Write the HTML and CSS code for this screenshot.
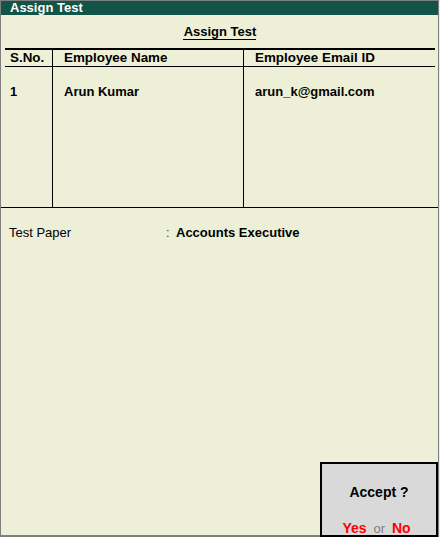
FILE: index.html
```html
<!DOCTYPE html>
<html lang="en">

<head>
    <meta charset="UTF-8">
    <meta name="viewport" content="width=device-width, initial-scale=1.0">
    <title>Assign Test</title>
    <link rel="stylesheet" href="styles.css">
</head>

<body>
    <div class="window">
        <header class="titlebar">Assign Test</header>

        <div class="heading">
            <span>Assign Test</span>
        </div>

        <section class="list">
            <div class="grid">
                <div class="th">S.No.</div>
                <div class="th col">Employee Name</div>
                <div class="th col">Employee Email ID</div>

                <div class="td">1</div>
                <div class="td col">Arun Kumar</div>
                <div class="td col">arun_k@gmail.com</div>
            </div>
        </section>

        <div class="field">
            <span class="label">Test Paper</span>
            <span class="colon">:</span>
            <span class="value">Accounts Executive</span>
        </div>

        <!-- confirm box -->
        <div class="accept">
            <div class="accept-title">Accept ?</div>
            <div class="accept-opts">
                <span class="opt">Yes</span>
                <span class="or">or</span>
                <span class="opt">No</span>
            </div>
        </div>
    </div>
</body>

</html>
```

FILE: styles.css
```css
body {
    margin: 0;
    font-family: "Liberation Sans", Arial, sans-serif;
    font-size: 13px;
    color: #000;
    background-color: #edf0d6;
}

.window {
    position: relative;
    width: 439px;
    height: 537px;
    box-sizing: border-box;
    border-top: 1px solid #7f7f7f;
    border-left: 1px solid #7f7f7f;
    border-right: 1px solid #7f7f7f;
    border-bottom: 2px solid #7f7f7f;
    background-color: #edf0d6;
    display: flex;
    flex-direction: column;
}

/* title bar */
.titlebar {
    height: 14px;
    line-height: 14px;
    padding-left: 9px;
    background-color: #125448;
    color: #fff;
    font-weight: bold;
    font-size: 13px;
}

.heading {
    display: flex;
    justify-content: center;
    padding-top: 10px;
}

.heading span {
    display: block;
    height: 14px;
    line-height: 14px;
    font-weight: bold;
    border-bottom: 1px solid #000;
    padding-left: 1px;
}

/* employee list */
.list {
    margin-top: 8px;
    border-bottom: 1px solid #000;
    padding: 0 3px 0 4px;
}

.grid {
    display: grid;
    grid-template-columns: 47px 191px 1fr;
    grid-template-rows: 17px 140px;
    border-top: 2px solid #000;
}

.th {
    line-height: 16px;
    font-size: 13.4px;
    font-weight: bold;
    border-bottom: 1px solid #000;
    padding-left: 5px;
}

.td {
    line-height: 16px;
    font-weight: bold;
    padding-top: 17px;
    padding-left: 5px;
}

.th.col,
.td.col {
    border-left: 1px solid #000;
    padding-left: 11px;
}

/* test paper field */
.field {
    display: flex;
    line-height: 16px;
    padding: 17px 0 0 8px;
}

.label {
    width: 157px;
}

.colon {
    width: 10px;
    color: #444;
}

.value {
    font-weight: bold;
}

/* accept box */
.accept {
    position: absolute;
    left: 319px;
    top: 461px;
    width: 118px;
    height: 75px;
    box-sizing: border-box;
    border: 2px solid #000;
    background-color: #d9d9d9;
    text-align: center;
    font-size: 14px;
}

.accept-title {
    font-weight: bold;
    line-height: 16px;
    padding-top: 20px;
}

.accept-opts {
    line-height: 16px;
    padding-top: 20px;
    padding-right: 5px;
}

.opt {
    color: #ff0000;
    font-weight: bold;
}

.or {
    color: #808080;
    font-size: 13px;
    margin: 0 3px;
}
```
